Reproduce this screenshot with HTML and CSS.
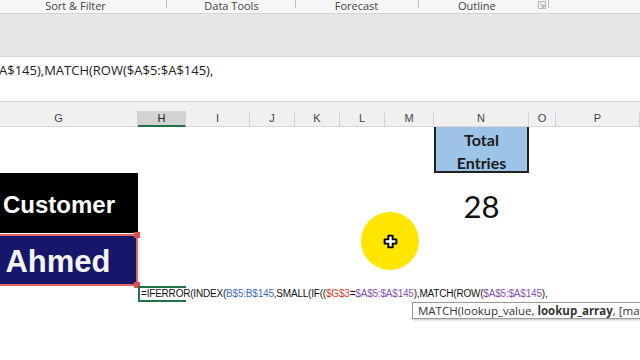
FILE: index.html
```html
<!DOCTYPE html>
<html>
<head>
<meta charset="utf-8">
<link rel="stylesheet" href="styles.css">
</head>
<body>
<div class="ribbon">
  <div class="grp g1"><span class="glabel">Sort &amp; Filter</span></div>
  <div class="grp g2"><span class="glabel">Data Tools</span></div>
  <div class="grp g3"><span class="glabel">Forecast</span></div>
  <div class="grp g4"><span class="glabel">Outline</span>
    <svg class="launcher" width="8" height="8" viewBox="0 0 8 8"><path d="M0.5 0.5H7.5V7.5H0.5Z" fill="none" stroke="#b8b8b8"/><path d="M2.5 2.5L6 6M6 3.5V6H3.5" fill="none" stroke="#999"/></svg>
  </div>
  <div class="grp g5"></div>
</div>
<div class="band"></div>
<div class="fbar"><span class="ftext">A$145),MATCH(ROW($A$5:$A$145),</span></div>
<div class="sheet">
  <div class="heads">
    <div class="ch">G</div><div class="ch sel">H</div><div class="ch">I</div><div class="ch">J</div><div class="ch">K</div><div class="ch">L</div><div class="ch">M</div><div class="ch">N</div><div class="ch">O</div><div class="ch">P</div>
  </div>
  <div class="grid">
    <div class="total"><span>Total</span><span>Entries</span></div>
    <div class="customer">Customer</div>
    <div class="count">28</div>
    <div class="ahmed">Ahmed<i class="hd hd-t"></i><i class="hd hd-b"></i></div>
    <div class="active"><span class="formula">=IFERROR(INDEX(<b class="c-blue">B$5:B$145</b>,SMALL(IF((<b class="c-red">$G$3</b>=<b class="c-pur">$A$5:$A$145</b>),MATCH(ROW(<b class="c-pur">$A$5:$A$145</b>),</span></div>
    <div class="spot"><svg width="15" height="15" viewBox="0 0 14 14"><path d="M5 1.5H9V5H12.5V9H9V12.5H5V9H1.5V5H5Z" fill="#fff" stroke="#000" stroke-width="1.8" stroke-linejoin="round"/></svg></div>
    <div class="tip">MATCH(lookup_value, <b>lookup_array</b>, [match_type])</div>
  </div>
</div>
</body>
</html>
```

FILE: styles.css
```css
html, body {
  margin: 0;
  padding: 0;
}
body {
  width: 640px;
  height: 360px;
  overflow: hidden;
  background: #fff;
  font-family: "Open Sans", "Liberation Sans", sans-serif;
  display: flex;
  flex-direction: column;
}
.ribbon {
  height: 14px;
  flex: 0 0 14px;
  display: flex;
  background: #f6f6f6;
  border-bottom: 1px solid #d4d4d4;
  box-sizing: border-box;
}
.grp {
  position: relative;
  display: flex;
  justify-content: center;
  align-items: flex-start;
  font-size: 11px;
  color: #444;
}
.grp::after {
  content: "";
  position: absolute;
  right: 0;
  top: 0;
  height: 8px;
  border-right: 1px solid #bdbdbd;
}
.glabel {
  line-height: 12px;
  white-space: nowrap;
}
.g1 { width: 167px; padding-right: 16px; box-sizing: border-box; }
.g2 { width: 129px; }
.g3 { width: 123px; padding-right: 2px; box-sizing: border-box; }
.g4 {
  width: 130px;
  justify-content: flex-start;
  padding-left: 39px;
  padding-right: 3px;
  box-sizing: border-box;
}
.g5::after { display: none; }
.launcher { margin-left: auto; margin-top: 1px; }
.band {
  flex: 0 0 43px;
  background: #e6e6e6;
  border-bottom: 1px solid #d2d2d2;
  box-sizing: border-box;
}
.fbar {
  flex: 0 0 45px;
  background: #fff;
  border-bottom: 1px solid #d0d0d0;
  font-size: 13px;
  color: #222;
  line-height: 16px;
  padding-top: 5px;
  box-sizing: border-box;
  white-space: nowrap;
  overflow: hidden;
}
.ftext { margin-left: -1px; }
.sheet {
  flex: 1;
  width: 660px;
  margin-left: -20px;
  display: flex;
  flex-direction: column;
}
.heads, .grid {
  display: grid;
  grid-template-columns: 158px 48px 64px 45px 45px 45px 49px 95px 27px 84px;
}
.heads {
  height: 25px;
  padding-top: 9px;
  background: #f0f0f0;
  border-bottom: 1px solid #d8d8d8;
  box-sizing: border-box;
}
.ch {
  font-family: "Liberation Sans", Arial, sans-serif;
  font-size: 11px;
  color: #444;
  text-align: center;
  line-height: 15px;
  border-right: 1px solid #d2d2d2;
  box-sizing: border-box;
}
.ch.sel {
  background: #d3d3d3;
  border-bottom: 2px solid #217346;
  color: #222;
  line-height: 14px;
  margin-bottom: -1px;
}
.grid {
  position: relative;
  flex: 1;
  grid-template-rows: 46px 61px 52px 16px 1fr;
}
.total {
  grid-column: 8;
  grid-row: 1;
  background: #9dc3e6;
  border: 2px solid #222;
  border-top: none;
  display: flex;
  flex-direction: column;
  align-items: center;
  justify-content: center;
  font-family: Lato, "Open Sans", sans-serif;
  font-weight: bold;
  font-size: 16px;
  line-height: 23px;
  color: #1b1b1b;
  padding-top: 3px;
}
.customer {
  grid-column: 1;
  grid-row: 2;
  background: #000;
  color: #fff;
  font-family: "Liberation Sans", Arial, sans-serif;
  font-weight: bold;
  font-size: 24px;
  display: flex;
  align-items: center;
  justify-content: center;
  padding-top: 4px;
  margin-bottom: 1px;
}
.count {
  grid-column: 8;
  grid-row: 2;
  font-family: Lato, "Open Sans", sans-serif;
  font-size: 31px;
  color: #111;
  display: flex;
  align-items: center;
  justify-content: center;
  padding-top: 5px;
}
.ahmed {
  position: relative;
  grid-column: 1;
  grid-row: 3;
  background: #16166a;
  border: 2px solid #e06464;
  color: #f4f4f4;
  font-family: "Liberation Sans", Arial, sans-serif;
  font-weight: bold;
  font-size: 31px;
  display: flex;
  align-items: center;
  justify-content: center;
  padding-right: 2px;
  padding-top: 4px;
}
.hd {
  position: absolute;
  right: -4px;
  width: 6px;
  height: 6px;
  background: #d9504d;
}
.hd-t { top: -4px; }
.hd-b { bottom: -4px; }
.active {
  grid-column: 2;
  grid-row: 4;
  border: 2px solid #217346;
  border-right: none;
  position: relative;
  z-index: 1;
}
.formula {
  position: absolute;
  left: 1px;
  top: -1px;
  font-family: "Liberation Sans", Arial, sans-serif;
  font-size: 10px;
  line-height: 14px;
  white-space: nowrap;
  color: #111;
  letter-spacing: -0.2px;
}
.formula b { font-weight: normal; }
.c-blue { color: #3b6fc4; }
.c-red { color: #d23c2a; }
.c-pur { color: #8a4fb0; }
.spot {
  position: absolute;
  left: 381px;
  top: 85px;
  width: 58px;
  height: 58px;
  border-radius: 50%;
  background: #ffe600;
  display: flex;
  align-items: center;
  justify-content: center;
}
.tip {
  position: absolute;
  left: 432px;
  top: 175px;
  height: 15px;
  padding: 0 5px;
  background: #fff;
  border: 1px solid #9a9a9a;
  box-shadow: 1px 1px 2px rgba(0,0,0,0.25);
  font-size: 11.5px;
  line-height: 15px;
  color: #333;
  white-space: nowrap;
}
```
